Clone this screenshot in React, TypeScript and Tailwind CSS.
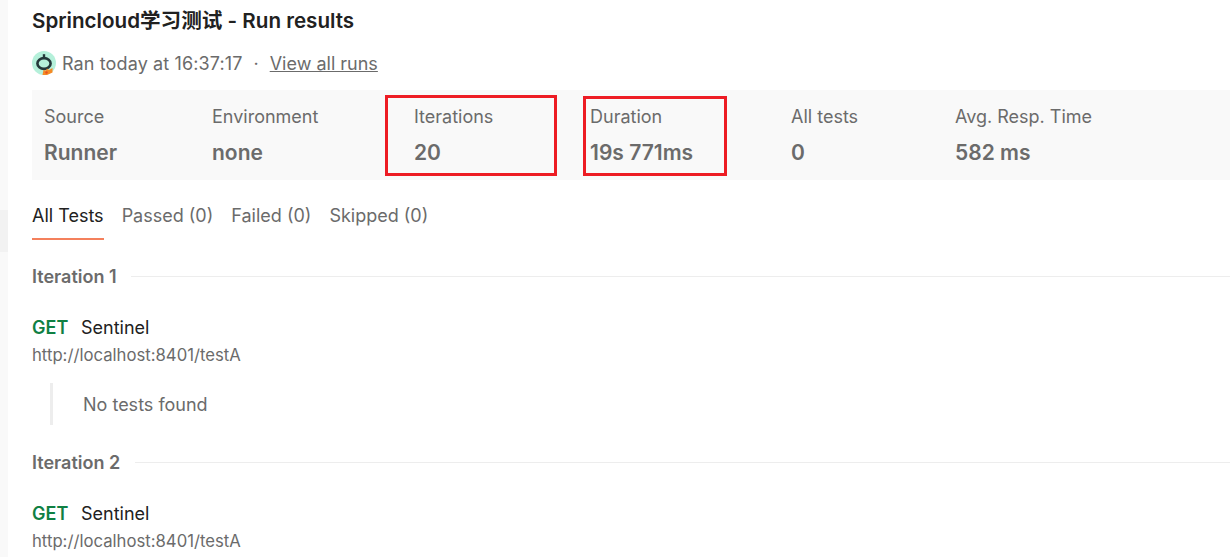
import React from "react";

const stats = [
  { label: "Source", value: "Runner", width: "w-[168px]" },
  { label: "Environment", value: "none", width: "w-[202px]" },
  { label: "Iterations", value: "20", width: "w-[176px]" },
  { label: "Duration", value: "19s 771ms", width: "w-[201px]" },
  { label: "All tests", value: "0", width: "w-[164px]" },
  { label: "Avg. Resp. Time", value: "582 ms", width: "w-[200px]" },
];

const tabs = ["Passed (0)", "Failed (0)", "Skipped (0)"];

const Avatar = () => (
  <svg width="24" height="24" viewBox="0 0 24 24" className="shrink-0">
    <circle cx="12" cy="12" r="12" fill="#b5f0da" />
    <rect x="10.8" y="3.2" width="2.4" height="4" fill="#24383a" />
    <ellipse cx="12" cy="12.5" rx="6.6" ry="5.4" fill="none" stroke="#24383a" strokeWidth="2.6" />
    <path d="M10.5 24 L11.5 19 L14 19.5 L15 17.5 L17 19 L20.5 17 L20.5 21.5 L15 24 Z" fill="#f58a25" />
    <circle cx="14.5" cy="21.5" r="1.2" fill="#e8501f" />
  </svg>
);

const Iteration = ({ n, gap, showEmpty }: { n: number; gap: string; showEmpty: boolean }) => (
  <div>
    <div className="flex items-center h-[22px]">
      <div className="text-[18px] font-semibold text-[#6b6b6b] leading-[22px]">Iteration {n}</div>
      <div className={`grow h-px mb-[2px] bg-[#ededed] ${gap}`} />
    </div>
    <div className="flex items-center mt-[29px] h-[22px] text-[18px] leading-[22px]">
      <span className="font-semibold text-[#0f8043] w-[49px]">GET</span>
      <span className="text-[#212121]">Sentinel</span>
    </div>
    <div className="mt-[5px] text-[16.7px] leading-[22px] text-[#6b6b6b]">http://localhost:8401/testA</div>
    {showEmpty && (
      <div className="mt-[17px] ml-[18px] h-[42px] border-l-[3px] border-[#ededed] pl-[30px] flex items-center text-[18px] text-[#6b6b6b]">
        No tests found
      </div>
    )}
  </div>
);

export default function App() {
  return (
    <div className="relative w-[1230px] h-[557px] overflow-hidden bg-white flex font-['Inter','Noto_Sans_CJK_SC',sans-serif]">
      {/* LEFT STRIP */}
      <div className="w-[8px] shrink-0 bg-[#f9f9f9] flex flex-col">
        <div className="mt-[210px] h-[42px] bg-[#f2f2f2]" />
      </div>
      <div className="grow pl-[24px] min-w-0">
        {/* HEADER */}
        <div className="pt-[9px] text-[20.6px] leading-[24px] font-semibold text-[#212121]">
          Sprincloud学习测试 - Run results
        </div>
        <div className="flex items-center mt-[18px] h-[24px] text-[18px] text-[#6b6b6b]">
          <Avatar />
          <span className="ml-[6px] tracking-[0.12px]">Ran today at 16:37:17</span>
          <span className="mx-[11px]">·</span>
          <span className="underline">View all runs</span>
        </div>
        {/* STATS */}
        <div className="relative mt-[15px] h-[90px] bg-[#f9f9f9] flex pl-[12px] pt-[15px]">
          {stats.map((s) => (
            <div key={s.label} className={`${s.width} shrink-0`}>
              <div className="text-[18px] leading-[24px] text-[#6b6b6b]">{s.label}</div>
              <div className="mt-[12px] text-[21px] leading-[24px] font-semibold text-[#6b6b6b]">{s.value}</div>
            </div>
          ))}
          <div className="absolute left-[353px] top-[5px] w-[172px] h-[81px] border-[3px] border-[#ed1c24]" />
          <div className="absolute left-[551px] top-[6px] w-[144px] h-[80px] border-[3px] border-[#ed1c24]" />
        </div>
        {/* TABS */}
        <div className="flex mt-[24px] text-[18px] leading-[24px] text-[#6b6b6b]">
          <div className="h-[36px] border-b-2 border-[#f4805c] text-[#212121] mr-[18px]">All Tests</div>
          {tabs.map((t) => (
            <div key={t} className="mr-[18px]">
              {t}
            </div>
          ))}
        </div>
        {/* ITERATIONS */}
        <div className="mt-[26px] flex flex-col gap-[27px]">
          <Iteration n={1} gap="ml-[14px]" showEmpty />
          <Iteration n={2} gap="ml-[15px]" showEmpty={false} />
        </div>
      </div>
    </div>
  );
}
